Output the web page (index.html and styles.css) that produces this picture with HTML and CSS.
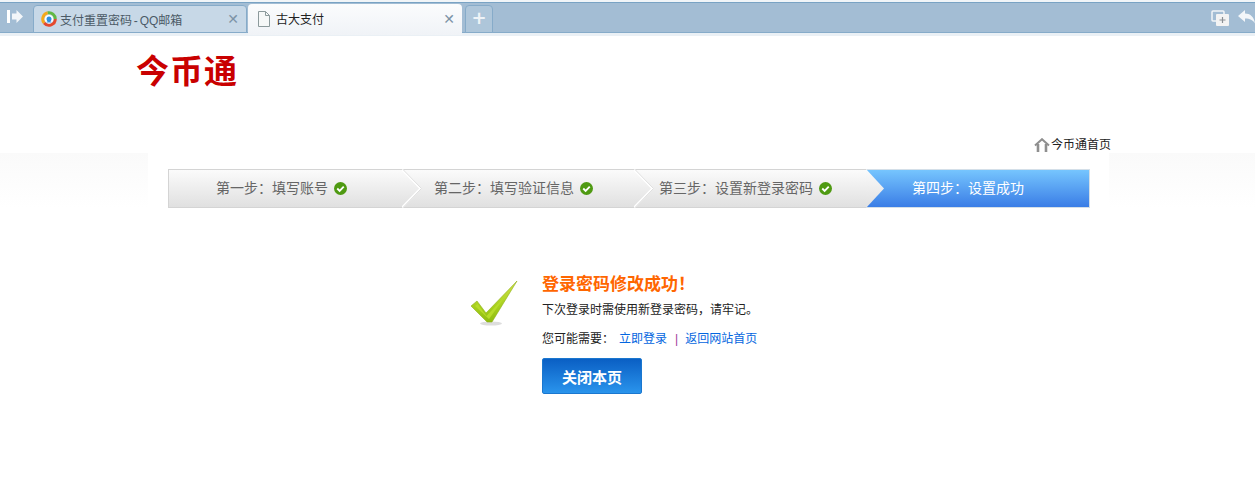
FILE: index.html
```html
<!DOCTYPE html>
<html lang="zh-CN">
<head>
<meta charset="utf-8">
<title>古大支付</title>
<link rel="stylesheet" href="styles.css">
</head>
<body>
<div class="tabbar">
  <svg class="side-icon" width="18" height="16" viewBox="0 0 18 16"><defs><linearGradient id="stepfill" x1="0" y1="0" x2="0" y2="1"><stop offset="0" stop-color="#fbfbfb"/><stop offset="1" stop-color="#e0e0e0"/></linearGradient></defs><rect x="0" y="1" width="3" height="13" fill="#fff"/><path d="M5 4.500h4.500V1l6.500 6.500-6.500 6.500v-3.500H5z" fill="#f3f6f9"/></svg>
  <div class="tab tab-off">
    <svg class="tab-icon" width="16" height="16" viewBox="0 0 16 16"><g fill="none" stroke-width="3"><path d="M3.200 12A6.300 6.300 0 0 1 6.800 1.800" stroke="#f5a81c"/><path d="M6.800 1.800A6.300 6.300 0 0 1 14.300 8" stroke="#62b845"/><path d="M14.300 8A6.300 6.300 0 0 1 3.200 12" stroke="#e4492f"/></g><circle cx="8" cy="8.300" r="4.200" fill="#fff"/><circle cx="8" cy="8" r="2.500" fill="#2b8fe3"/><path d="M5.300 11.500c.5-2 4.900-2 5.400 0z" fill="#2b8fe3"/></svg>
    <span class="tab-label tight">支付重置密码 - QQ邮箱</span>
    <span class="tab-close">✕</span>
  </div>
  <div class="tab tab-on">
    <svg class="tab-icon" width="16" height="16" viewBox="0 0 16 16"><path d="M2.500.5h7l4 4v11h-11z" fill="#f6f8f8" stroke="#8c9a9c"/><path d="M9.500.5v4h4" fill="none" stroke="#8c9a9c"/></svg>
    <span class="tab-label dark">古大支付</span>
    <span class="tab-close">✕</span>
  </div>
  <div class="tab-new">+</div>
  <div class="bar-tools">
    <svg width="19" height="16" viewBox="0 0 19 16"><rect x="1" y="1" width="12" height="10" rx="1" fill="none" stroke="#f2f5f8" stroke-width="1.500"/><rect x="5" y="4" width="13" height="12" rx="1" fill="#f3f3f3"/><path d="M11.500 7v6M8.500 10h6" stroke="#8a8f94" stroke-width="1.200"/></svg>
    <svg width="17" height="14" viewBox="0 0 17 14"><path d="M0 6 7 0v3.500c5 0 9 3 10 10-2-3.500-5-5-10-5V12z" fill="#f3f6f9"/></svg>
  </div>
</div>
<div class="bar-strip"></div>

<header class="site-head">
  <div class="logo">今币通</div>
  <a class="home-link" href="#">
    <svg width="16" height="14" viewBox="0 0 16 14"><path d="M1 7.500 8 1.200l7 6.300" fill="none" stroke="#8f8f8f" stroke-width="2"/><path d="M4 6v8M12 6v8" stroke="#8f8f8f" stroke-width="2.600"/></svg>
    今币通首页
  </a>
</header>

<section class="steps-band">
  <ol class="steps">
    <li class="step s1">第一步：填写账号<i class="ok"><svg width="13" height="13" viewBox="0 0 12 12"><circle cx="6" cy="6" r="6" fill="#4f9a12"/><path d="M3 6l2.200 2.200L9 4.300" fill="none" stroke="#fff" stroke-width="1.700"/></svg></i>
      <svg class="chev" width="22" height="39" viewBox="0 0 22 39"><path d="M-.5 0 18.500 19.500-.5 39" fill="none" stroke="#fff" stroke-width="2"/><path d="M.5 0 19.500 19.500.5 39" fill="none" stroke="#dedede"/></svg>
    </li>
    <li class="step s2">第二步：填写验证信息<i class="ok"><svg width="13" height="13" viewBox="0 0 12 12"><circle cx="6" cy="6" r="6" fill="#4f9a12"/><path d="M3 6l2.200 2.200L9 4.300" fill="none" stroke="#fff" stroke-width="1.700"/></svg></i>
      <svg class="chev" width="22" height="39" viewBox="0 0 22 39"><path d="M-.5 0 18.500 19.500-.5 39" fill="none" stroke="#fff" stroke-width="2"/><path d="M.5 0 19.500 19.500.5 39" fill="none" stroke="#dedede"/></svg>
    </li>
    <li class="step s3">第三步：设置新登录密码<i class="ok"><svg width="13" height="13" viewBox="0 0 12 12"><circle cx="6" cy="6" r="6" fill="#4f9a12"/><path d="M3 6l2.200 2.200L9 4.300" fill="none" stroke="#fff" stroke-width="1.700"/></svg></i>
      <svg class="chev" width="22" height="39" viewBox="0 0 22 39"><path d="M0 0 18 19.500 0 39z" fill="url(#stepfill)"/></svg>
    </li>
    <li class="step s4">第四步：设置成功</li>
  </ol>
</section>

<main class="result">
  <svg class="big-check" width="50" height="48" viewBox="0 0 50 48">
    <defs><linearGradient id="g" x1="0" y1="0" x2="0" y2="1"><stop offset="0" stop-color="#cfe04a"/><stop offset=".6" stop-color="#a9d11f"/><stop offset="1" stop-color="#8fbc10"/></linearGradient></defs>
    <ellipse cx="21" cy="43.500" rx="11" ry="2" fill="#ddd"/>
    <path d="M1 26 7 21 16 33 47 1 22 42 17 42z" fill="url(#g)" stroke="#8eb01a" stroke-width=".6"/>
    <path d="M5 26 7.500 24 16.500 36 37 14 19 39z" fill="#b7dc2a"/>
  </svg>
  <div class="result-body">
    <h1 class="result-title">登录密码修改成功！</h1>
    <p class="result-note">下次登录时需使用新登录密码，请牢记。</p>
    <p class="result-links">您可能需要：<a href="#">立即登录</a><span class="sep">|</span><a href="#">返回网站首页</a></p>
    <button class="close-btn" type="button">关闭本页</button>
  </div>
</main>
</body>
</html>
```
FILE: styles.css
```css
* { box-sizing: border-box; }
html, body { margin: 0; padding: 0; }
body {
  background: #fff;
  height: 504px;
  overflow: hidden;
  font-family: "Liberation Sans", "Noto Sans CJK SC", sans-serif;
  font-size: 12px;
  color: #222;
}
a { text-decoration: none; }

.tabbar {
  height: 33px;
  background: #a3bdd4;
  border-top: 2px solid #f1f5f8;
  box-shadow: inset 0 1px 0 #79a3c4, inset 0 -1px 0 #86abc9;
  display: flex;
  align-items: flex-end;
  padding-left: 33px;
  position: relative;
}
.side-icon { position: absolute; left: 7px; top: 7px; }
.tab {
  width: 214px;
  height: 28px;
  border-radius: 4px 4px 0 0;
  display: flex;
  align-items: center;
  padding: 0 7px;
}
.tab-off {
  background: #c7d8e7;
  border: 1px solid #86abc9;
}
.tab-on {
  margin-left: 1px;
  background: linear-gradient(#fbfcfd, #f0f3f7);
  height: 31px;
  margin-bottom: -2px;
  padding: 0 7px 2px 8px;
}
.tab-icon { flex: none; margin-right: 3px; }
.tab-label { flex: 1; color: #4b5a66; white-space: nowrap; }
.tab-label.tight { word-spacing: -1.500px; }
.tab-label.dark { color: #222; margin-left: 1px; }
.tab-close { color: #7d93a6; font-size: 14px; font-weight: bold; font-family: "DejaVu Sans", sans-serif; }
.tab-new {
  width: 28px;
  height: 28px;
  margin-left: 3px;
  border: 1px solid #86abc9;
  border-radius: 4px 4px 0 0;
  background: #aec6da;
  color: #eef3f7;
  font: bold 18px/24px "DejaVu Sans", sans-serif;
  text-align: center;
}
.bar-tools {
  margin-left: auto;
  display: flex;
  gap: 8px;
  align-self: center;
}
.bar-strip { height: 3px; background: #eaf0f5; }

.site-head {
  height: 117px;
  position: relative;
  padding: 9px 0 0 136px;
}
.logo {
  font-family: "Noto Sans CJK SC", sans-serif;
  font-size: 33px;
  line-height: 48px;
  font-weight: 700;
  color: #c90000;
  letter-spacing: 1px;
}
.home-link {
  position: absolute;
  left: 1034px;
  top: 101px;
  display: flex;
  align-items: center;
  color: #222;
  gap: 1px;
  line-height: 16px;
}

.steps-band {
  height: 55px;
  padding-left: 148px;
  background: linear-gradient(#fafafa, #fff);
}
.steps {
  list-style: none;
  margin: 0;
  width: 961px;
  height: 55px;
  padding: 16px 19px 0 20px;
  background: #fff;
  display: flex;
}
.step {
  height: 39px;
  border-top: 1px solid #d4d4d4;
  border-bottom: 1px solid #d4d4d4;
  background: linear-gradient(#fbfbfb, #e0e0e0);
  font-size: 14px;
  color: #666;
  line-height: 35px;
  display: flex;
  align-items: center;
  position: relative;
  white-space: nowrap;
}
.s1 { width: 234px; padding-left: 47px; border-left: 1px solid #d4d4d4; }
.s2 { width: 232px; padding-left: 32px; }
.s3 { width: 232px; padding-left: 25px; }
.s4 {
  width: 224px;
  padding-left: 46px;
  color: #fff;
  background: linear-gradient(#76c5fe, #3a7de6);
  border: 1px solid #d4dfe8;
  border-left: 0;
}
.ok { display: inline-flex; margin-left: 6px; }
.chev { position: absolute; left: 100%; top: -1px; z-index: 1; }

.result {
  display: flex;
  align-items: flex-start;
  padding: 63px 0 0 470px;
}
.big-check { flex: none; margin-top: 9px; }
.result-body { margin-left: 22px; }
.result-title {
  margin: 0;
  font-family: "Noto Sans CJK SC", sans-serif;
  font-size: 17px;
  line-height: 24px;
  color: #f60;
  font-weight: 700;
}
.result-note { margin: 6px 0 0; line-height: 18px; }
.result-links { margin: 11px 0 0; line-height: 18px; }
.result-links a { color: #0366e0; }
.result-links a:first-of-type { margin-left: 5px; }
.sep { color: #a03a9a; margin: 0 7px 0 8px; }
.close-btn {
  display: block;
  margin-top: 10px;
  width: 100px;
  height: 36px;
  border: 1px solid #1a77cf;
  border-radius: 2px;
  background: linear-gradient(#0a5fc4, #2a94ec);
  color: #fff;
  font-family: "Noto Sans CJK SC", sans-serif;
  font-size: 15px;
  font-weight: 700;
  padding: 0;
}
```
